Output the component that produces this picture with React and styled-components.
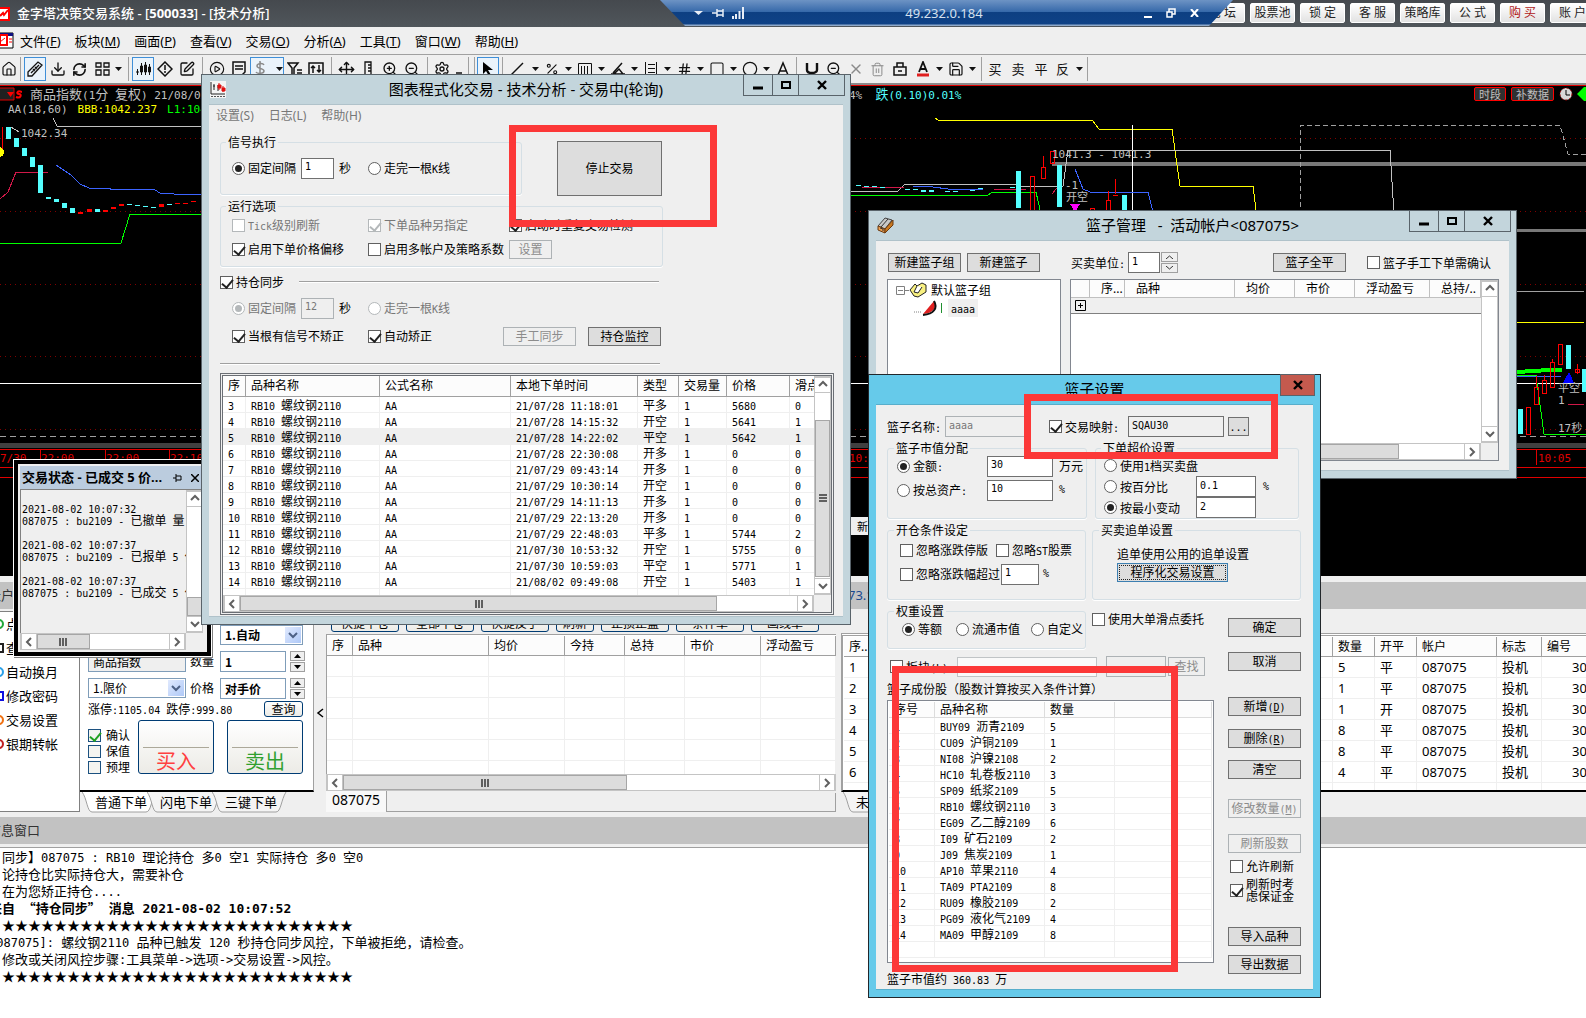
import React, { Component } from 'react';
import styled, { createGlobalStyle, css } from 'styled-components';
import {
  House, Download, RefreshCw, LayoutGrid, SquarePen, CirclePlay, Move, ZoomIn, ZoomOut,
  Settings, Percent, Hash, Square, Circle, X, Trash2, Lock, Save,
} from 'lucide-react';

const yahei = '"Noto Sans", "Noto Sans CJK SC", sans-serif';
const song = '"Noto Sans CJK SC", sans-serif';
const mono = '"DejaVu Sans Mono", "Noto Sans CJK SC", monospace';

const GlobalStyle = createGlobalStyle`
  * { box-sizing: border-box; }
  body {
    margin: 0;
    overflow: hidden;
    background: #fff;
    color: #000;
    font: 12px/16px ${song};
    --half: 10px;
  }
  button, input, select, fieldset, legend { margin: 0; padding: 0; font: inherit; color: inherit; border-radius: 0; }
`;

/* text: full width glyphs in the body face, ascii runs in a half width mono */
const Half = styled.span`
  font-family: ${mono};
  font-size: var(--half);
  line-height: 0;
  white-space: pre;
`;
const Sim = ({ children }) =>
  String(children).split(/([\x20-\x7e]+)/).filter(Boolean).map((part, i) =>
    /^[\x20-\x7e]/.test(part) ? <Half key={i}>{part}</Half> : part
  );

const Gap = styled.span`
  flex: 0 0 ${props => props.$w}px;
`;

/* ---------- controls ---------- */
const Push = styled.button`
  flex: none;
  width: ${props => props.$w || 73}px;
  height: ${props => props.$h || 19}px;
  padding-bottom: 1px;
  border: 1px solid #707070;
  background: #dddddd;
  line-height: 16px;
  white-space: nowrap;
  &:disabled {
    color: #8c8c8c;
    border-color: #adb2b5;
    background: #efefef;
  }
  ${props => props.$focus && css`
    border-color: #3c7fb1;
    outline: 1px dotted #222;
    outline-offset: -3px;
  `}
`;

const Field = styled.input`
  flex: none;
  width: ${props => props.$w}px;
  height: 21px;
  padding: 0 3px 3px;
  border: 1px solid #707070;
  background: ${props => (props.$gray ? '#efefef' : '#fff')};
  font: 10px/16px ${mono};
  &:disabled {
    color: #777;
    border-color: #adb2b5;
    background: #efefef;
  }
`;

const Option = styled.label`
  display: flex;
  align-items: center;
  gap: 3px;
  white-space: nowrap;
  color: ${props => (props.$dim ? '#777' : '#000')};
  line-height: ${props => (props.$tight ? 12 : 16)}px;
  input {
    appearance: none;
    position: relative;
    flex: none;
    width: 13px;
    height: 13px;
    border: 1px solid ${props => (props.$dim ? '#b4b8ba' : '#606060')};
    background: #fff;
  }
  input[type='radio'] {
    border-radius: 50%;
  }
  input[type='checkbox']:checked::after {
    content: '';
    position: absolute;
    left: 3px;
    top: 0;
    width: 5px;
    height: 9px;
    border: solid ${props => (props.$dim ? '#b4b8ba' : '#222')};
    border-width: 0 2px 2px 0;
    transform: rotate(40deg);
  }
  input[type='radio']:checked::after {
    content: '';
    position: absolute;
    inset: 2px;
    border-radius: 50%;
    background: ${props => (props.$dim ? '#b4b8ba' : '#222')};
  }
`;
const Tick = ({ text, on, dim, lines }) => (
  <Option $dim={dim} $tight={lines}>
    <input type="checkbox" defaultChecked={on} disabled={dim} />
    <span>{lines ? lines.map((l, i) => <React.Fragment key={l}>{i > 0 && <br />}{l}</React.Fragment>) : <Sim>{text}</Sim>}</span>
  </Option>
);
const Radio = ({ text, on, dim, name }) => (
  <Option $dim={dim}>
    <input type="radio" name={name} defaultChecked={on} disabled={dim} />
    <span><Sim>{text}</Sim></span>
  </Option>
);

const Group = styled.fieldset`
  flex: none;
  width: ${props => props.$w}px;
  min-width: 0;
  padding: ${props => props.$pad};
  border: 1px solid #d5dfe5;
  border-radius: 3px;
  box-shadow: 0 1px 0 #fff;
  legend {
    margin-left: ${props => props.$lead}px;
    padding: 0 2px;
    line-height: 12px;
    height: 12px;
  }
`;
const Line = styled.div`
  display: ${props => (props.$cols ? 'grid' : 'flex')};
  grid-template-columns: ${props => props.$cols};
  align-items: center;
  height: ${props => props.$h || 24}px;
  margin-top: ${props => props.$mt || 0}px;
  padding-left: ${props => props.$pl || 0}px;
  white-space: nowrap;
`;
const Cell = styled.div`
  display: flex;
  align-items: center;
  gap: ${props => props.$gap || 5}px;
  padding-left: ${props => props.$pl || 0}px;
`;
const Rule = styled.div`
  flex: 1;
  height: 2px;
  max-width: ${props => props.$max || 440}px;
  margin-top: ${props => props.$mt || 0}px;
  border-top: 1px solid #a0a0a0;
  border-bottom: 1px solid #fff;
`;

/* ---------- scroll bars ---------- */
const Bar = styled.div`
  display: flex;
  flex-direction: ${props => (props.$v ? 'column' : 'row')};
  ${props => (props.$v ? 'width: 17px; height: 100%;' : 'height: 17px; width: 100%;')}
  background: #fff;
  border: 1px solid #c4c4c4;
`;
const BarEnd = styled.button`
  flex: 0 0 16px;
  display: grid;
  place-items: center;
  border: 0 solid #c4c4c4;
  border-width: ${props => (props.$v ? '1px 0' : '0 1px')};
  background: #fff;
`;
const Thumb = styled.div`
  flex: ${props => props.$size} 0 0;
  display: grid;
  place-items: center;
  border: 1px solid #a6a6a6;
  background: #dcdcdc;
`;
const Track = styled.div`
  flex: ${props => props.$size} 0 0;
`;
const arrows = { up: 'M1 6l4-4 4 4', down: 'M1 3l4 4 4-4', left: 'M7 1L3 5l4 4', right: 'M3 1l4 4-4 4' };
const Arrow = ({ to, color = '#606060' }) => (
  <svg width="10" height="10"><path d={arrows[to]} fill="none" stroke={color} strokeWidth="2" /></svg>
);
const Scroll = ({ v, parts, grip }) => (
  <Bar $v={v}>
    <BarEnd type="button" $v={v} aria-label="back"><Arrow to={v ? 'up' : 'left'} /></BarEnd>
    <Track $size={parts[0]} />
    {parts[1] > 0 && (
      <Thumb $size={parts[1]}>
        {grip && <svg width="8" height="8"><path d={v ? 'M0 1h8M0 4h8M0 7h8' : 'M1 0v8M4 0v8M7 0v8'} stroke="#606060" strokeWidth="2" /></svg>}
      </Thumb>
    )}
    <Track $size={parts[2]} />
    <BarEnd type="button" $v={v} aria-label="forward"><Arrow to={v ? 'down' : 'right'} /></BarEnd>
  </Bar>
);

/* ---------- tables ---------- */
const Sheet = styled.div`
  overflow: hidden;
  min-width: 0;
  background: #fff;
`;
const Table = styled.table`
  width: ${props => props.$w || '100%'};
  table-layout: fixed;
  border-collapse: separate;
  border-spacing: 0;
  th, td {
    padding: 0 0 0 ${props => props.$inset || 5}px;
    text-align: left;
    font-weight: normal;
    white-space: nowrap;
    overflow: hidden;
    height: ${props => props.$row}px;
    line-height: ${props => props.$row - 1}px;
    border: solid #efefef;
    border-width: 0 1px 1px 0;
  }
  th {
    height: ${props => props.$head}px;
    line-height: ${props => props.$head - 1}px;
    background: #fcfcfc;
    font-family: ${yahei};
    border-color: ${props => props.$line || '#a0a0a0'};
  }
  td { ${props => props.$ui && `font-family: ${yahei}; font-size: 13px;`} }
  tr[data-hot] td { background: #efefef; }
`;
const Cols = ({ widths }) => (
  <colgroup>{widths.map((w, i) => <col key={i} width={w || undefined} />)}</colgroup>
);
const Blank = ({ n }) => <tr>{Array.from({ length: n }, (_, i) => <td key={i} />)}</tr>;

/* ---------- floating windows ---------- */
const Frame = styled.section`
  position: absolute;
  left: ${props => props.$x}px;
  top: ${props => props.$y}px;
  width: ${props => props.$w}px;
  padding: 0 7px 7px;
  border: 1px solid ${props => (props.$active ? '#22272b' : '#59636a')};
  background: ${props => (props.$active ? '#66caea' : '#c3d5dc')};
`;
const Caption = styled.header`
  position: relative;
  display: flex;
  justify-content: center;
  height: 29px;
  line-height: 28px;
  font-family: ${yahei};
  font-size: 15px;
  white-space: pre;
`;
const CaptionIcon = styled.span`
  position: absolute;
  left: 1px;
  top: 6px;
  line-height: 0;
`;
const CaptionButtons = styled.div`
  position: absolute;
  right: -2px;
  top: -1px;
  display: flex;
`;
const CaptionButton = styled.button`
  width: ${props => props.$w}px;
  height: 22px;
  margin-left: -1px;
  display: grid;
  place-items: center;
  border: 1px solid #59636a;
  background: ${props => (props.$red ? '#c45a4e' : 'transparent')};
`;
const Body = styled.div`
  border: 1px solid ${props => (props.$active ? '#58aecb' : '#b0c2ca')};
  border-left: 0;
  border-right: 0;
  background: #efefef;
`;
const glyphs = { min: 'M1 9h10', max: 'M2 3h8v6H2z', close: 'M2 2l8 8M10 2l-8 8' };
const WinButtons = ({ only }) => (
  <CaptionButtons>
    {!only && <CaptionButton $w={30} aria-label="min"><svg width="12" height="12"><path d={glyphs.min} stroke="#000" strokeWidth="3" /></svg></CaptionButton>}
    {!only && <CaptionButton $w={27} aria-label="max"><svg width="12" height="12"><path d={glyphs.max} fill="none" stroke="#000" strokeWidth="2" /></svg></CaptionButton>}
    <CaptionButton $w={only ? 35 : 47} $red={only} aria-label="close"><svg width="12" height="12"><path d={glyphs.close} stroke="#000" strokeWidth="2.4" /></svg></CaptionButton>
  </CaptionButtons>
);

const Mark = styled.div`
  position: absolute;
  left: ${props => props.$x}px;
  top: ${props => props.$y}px;
  width: ${props => props.$w}px;
  height: ${props => props.$h}px;
  border: 7px solid #fc3838;
  pointer-events: none;
`;

/* ---------- main window ---------- */
const Desk = styled.main`
  position: relative;
  display: flex;
  flex-direction: column;
  min-height: 100vh;
  overflow: hidden;
  background: #efefef;
`;
const TitleBar = styled.header`
  display: flex;
  align-items: center;
  height: 27px;
  overflow: hidden;
  background: linear-gradient(#45494e, #50565b);
  color: #fff;
  font: bold 13px/27px ${yahei};
`;
const TitleText = styled.h1`
  margin: 0 0 0 7px;
  font: inherit;
  font-weight: 500;
  b { font-weight: 700; }
`;
const Links = styled.nav`
  display: flex;
  gap: 5px;
  margin: -2px -9px 0 auto;
`;
const LinkButton = styled.button`
  width: 45px;
  height: 20px;
  border: 1px solid #fff;
  border-radius: 2px;
  background: linear-gradient(#fff, #e2e2e2);
  color: ${props => (props.$red ? '#b01818' : '#222')};
  font: 12px/18px ${yahei};
  white-space: pre;
`;
const Remote = styled.div`
  position: absolute;
  left: 660px;
  top: 0;
  width: 573px;
  height: 26px;
  padding: 0 34px 0 32px;
  display: flex;
  align-items: center;
  justify-content: space-between;
  clip-path: polygon(0 0, 100% 0, calc(100% - 24px) 100%, 25px 100%);
  background: linear-gradient(#6d93c4 0, #3568a9 12px, #0d3f82 12px, #0f4286 24px, #8fa9c9 25px);
  color: #d5e0ee;
  font: 13px/24px ${yahei};
`;
const RemoteIcons = styled.div`
  display: flex;
  align-items: center;
  gap: ${props => props.$gap}px;
  svg { display: block; }
`;
const MenuBar = styled.nav`
  display: flex;
  align-items: center;
  gap: 14px;
  height: 28px;
  border-bottom: 1px solid #a0a0a0;
  font: 13px/26px ${yahei};
`;
const Plain = styled.button`
  border: 0;
  background: none;
  color: ${props => props.$color || '#000'};
  white-space: nowrap;
`;
const Tools = styled.div`
  display: flex;
  align-items: center;
  height: 30px;
  border-bottom: 2px solid #8a8a8a;
  font: 13px/24px ${yahei};
`;
const Tool = styled.button`
  flex: none;
  width: ${props => props.$w}px;
  height: 24px;
  display: flex;
  align-items: center;
  justify-content: center;
  gap: 8px;
  border: ${props => (props.$on ? '1px solid #3f8fd8' : 0)};
  background: ${props => (props.$on ? '#eaf3fb' : 'none')};
  color: ${props => (props.$dim ? '#8a8a8a' : '#111')};
  svg { flex: none; }
`;
const Sep = styled.span`
  flex: 0 0 ${props => props.$w}px;
  height: 24px;
  background: linear-gradient(#a0a0a0, #a0a0a0) center / 1px 100% no-repeat;
`;

const d = (path, sw = 1.5) => <svg width="16" height="16" viewBox="0 0 16 16" fill="none" stroke="currentColor" strokeWidth={sw}><path d={path} /></svg>;
const Drop = () => <svg width="7" height="4"><path d="M0 0h7L3.500 4z" fill="#111" /></svg>;
const tools = [
  [17, <House size={16} strokeWidth={1.8} />], ['|', 7],
  [22, d('M1 11L11 1l4 3L5 15H1zM4 12l8-8M6 8l2 2M8 6l2 2', 1.3), 'on'], [23, <Download size={16} />],
  [21, <RefreshCw size={15} strokeWidth={2.6} />],
  [23, d('M2 2h5v4H2zM10 2h5v4h-5zM2 9h5v5H2zM10 9h5v5h-5z', 1.3)], [11, <Drop />], ['|', 8],
  [22, d('M2.5 8v6M1 11h3M6.500 2v12M10.500 1v13M14.500 3v11M5.500 5h2v6h-2zM9.500 4h2v7h-2zM13.500 6h2v5h-2z', 1), 'on'],
  [22, d('M8 1l7 7-7 7-7-7zM8 4v5M8 10v2')], [22, <SquarePen size={16} />], ['|', 8],
  [22, <CirclePlay size={16} strokeWidth={1.7} />], [22, d('M2 1h12v10l-3 3H2zM4 5h8M4 8h8')],
  [34, <React.Fragment key="s">{d('M12 4c-1-2-7-2-7 1s7 2 7 5-7 3-8 1M8 0v16')}<Drop /></React.Fragment>, 'on', 'dim'],
  [21, d('M1 2h10L7 7v7H5V7zM10 9h5M10 12h5')], [22, d('M1 2h14v12H1zM5 12V5M3 7l2-2 2 2M11 4v7M9 9l2 2 2-2')], ['|', 8],
  [22, <Move size={17} />], [22, d('M5 1h6v14H5zM8 4h3M8 7h3M8 10h3', 1.3)], [22, <ZoomIn size={16} />], [22, <ZoomOut size={16} />], ['|', 8],
  [22, <Settings size={16} />], [12, d('M5 12h6')], ['|', 6], ['|', 6],
  [22, <svg width="14" height="16" key="p"><path d="M2 1v12l3-3 3 5 2-1-3-5h5z" fill="#000" /></svg>, 'on'], ['|', 7],
  [21, d('M2 14L14 2')], [16, <Drop />],
  [18, <Percent size={14} />], [15, <Drop />], [18, d('M1.500 2.500h13v11h-13zM4.500 5v8M7.500 5v8M10.500 5v8', 1)], [15, <Drop />],
  [18, d('M1 13h14M3 12L12 2M4 13l5-5 4 5')], [15, <Drop />], [18, d('M2.500 1v14M13.500 1v14M5 3.500h7M5 7.500h7M5 11.500h7', 1)], [15, <Drop />],
  [18, <Hash size={15} />], [15, <Drop />], [18, <Square size={16} strokeWidth={1.6} />], [15, <Drop />],
  [18, <Circle size={16} strokeWidth={1.8} />], [15, <Drop />], [18, d('M3 14L8 2l5 12M5 10h6')], ['|', 9],
  [22, d('M3 2v7c0 4 10 4 10 0V2', 2.4)], [22, <ZoomOut size={16} />], [21, <X size={16} />, '', 'dim'],
  [23, <Trash2 size={15} strokeWidth={1.6} />, '', 'dim'], [22, d('M2 6h12v8H2zM5 6V2h6v4M6 10h4')],
  [23, <svg width="14" height="16" key="a"><path d="M3 11L7 1l4 10M4 8h6" fill="none" stroke="#111" strokeWidth="1.800" /><path d="M1 14h12" stroke="#e02020" strokeWidth="3" /></svg>],
  [11, <Drop />], [22, <Save size={16} strokeWidth={1.8} />], [11, <Drop />], ['|', 6],
  [22, '买'], [24, '卖'], [22, '平'], [21, '反'], [13, <Drop />], ['|', 2],
];

/* ---------- chart ---------- */
const ChartBox = styled.section`
  position: relative;
  height: 491px;
  overflow: hidden;
  border-top: 1px solid #e00000;
  background: #000;
  color: #c0c0c0;
  font-size: 13px;
  --half: 11px;
`;
const ChartHead = styled.div`
  position: relative;
  display: grid;
  grid-template-columns: 849px 1fr auto;
  align-items: center;
  height: 16px;
  white-space: nowrap;
  em { font-style: normal; color: #54ffff; }
`;
const HeadPart = styled.div`
  display: flex;
  align-items: center;
  gap: ${props => props.$gap}px;
  padding-left: ${props => props.$pl || 0}px;
`;
const Quote = styled(Half)`
  color: ${props => props.$c};
`;
const RedTag = styled.button`
  height: 14px;
  padding: 0 4px;
  border: 1px solid #f00;
  border-radius: 2px;
  background: #303030;
  color: #c0c0c0;
  font: 11px/11px ${song};
`;
const Plot = styled.svg`
  position: absolute;
  left: 0;
  top: 0;
  font: 11px ${mono};
`;
const leftBars = [
  [6, 127, 12], [14, 138, 9], [22, 148, 8], [30, 157, 10], [38, 165, 28], [46, 197, 2], [54, 199, 3], [62, 203, 5],
  [70, 208, 5], [95, 209, 3], [127, 204, 1], [135, 205, 1], [143, 206, 1], [151, 207, 1], [167, 204, 1],
];
const leftReds = [[78, 212, 2], [87, 209, 3], [103, 210, 2], [111, 207, 2], [119, 204, 2], [159, 204, 3], [175, 203, 1], [183, 203, 1], [191, 201, 1]];
const cyanBars = [
  [1016, 171, 37], [1057, 165, 42], [1122, 195, 20], [856, 185, 1], [864, 186, 1], [872, 186, 1], [880, 187, 1],
  [905, 189, 1], [913, 189, 1], [921, 190, 2], [929, 190, 2], [945, 191, 1], [953, 191, 1], [970, 190, 1], [978, 188, 1], [1010, 187, 1],
  [1518, 409, 25], [1566, 345, 24], [1582, 369, 23],
];
const redBoxes = [
  [1030, 176, 34], [1041, 167, 11], [1050, 151, 12], [1106, 200, 12], [1090, 208, 6],
  [1526, 407, 27], [1534, 387, 17], [1542, 380, 13], [1550, 362, 25], [1558, 344, 20], [1575, 369, 3],
];
const wicks = ['M1043 156v11M1108 191v9M1115 179v15M1113 195h5', 'M1536 376v11M1544 375v5M1552 359v3M1577 364v10'];
const Chart = () => (
  <ChartBox>
    <Plot width="1586" height="491" viewBox="0 86 1586 491" shapeRendering="crispEdges" fill="none">
      <path d="M0 138.500H1586M0 211.500H1586M0 284.500H1586M0 356.500H1586M0 429.500H1586" stroke="#800000" strokeDasharray="1 4" />
      <path d="M0 383.500H1586" stroke="#fff" />
      <path d="M0 436.500H1586" stroke="#a0a0a0" strokeDasharray="6 4" />
      <path d="M1052 164h534" stroke="#787878" strokeWidth="4" />
      <path d="M1500 230.500h86" stroke="#787878" strokeWidth="3" />
      <path d="M1500 291.500h84" stroke="#a0a0a0" />
      <path d="M1500 322.500h84M935 118l3 2h154l7 9h73l8 57h73l3 24" stroke="#ff0" />
      <path d="M1132.500 125v90" stroke="#fff" />
      <path d="M1300 215l1-90h259l8 29h18" stroke="#a0a0a0" strokeDasharray="5 3" />
      <path d="M53 118l4 8h145M851 191h47l7-7h109l6 2h43l5-36h322l4 64M11 127l8 5" stroke="#c0c0c0" />
      <path d="M56 165l15 10 9 9 9 4h21v1h32l13 1 5 3 14 1h30M913 186l20 1 15 2h35M1075 169l8 20 7 3h58l5 20M1516 376h45" stroke="#3c64ff" />
      <path d="M0 199l8-7 8-20h32M862 187h42M994 189h32M1052 194l8-10M1568 404h16" stroke="#d01848" />
      <path d="M0 243h121l9-29h72M851 195h137l5-3h43l5 22M1517 375h19l8 59h42" stroke="#0f0" />
      <path d="M1517 372l32-2h13" stroke="#0f0" strokeWidth="4" />
      {[...leftBars, ...cyanBars].map(([x, y, h]) => <rect key={`${x}-${y}`} x={x} y={y} width="5" height={h} fill="#54ffff" />)}
      {leftReds.map(([x, y, h]) => <rect key={x} x={x} y={y} width="5" height={h} fill="#f00" />)}
      {redBoxes.map(([x, y, h]) => <rect key={x} x={x} y={y} width="4" height={h} stroke="#f00" />)}
      {wicks.map(w => <path key={w} d={w} stroke="#f00" />)}
      <path d="M1070 204h10l-5 8z" fill="#f0f" />
      <path d="M1564 382l5-9 4 9z" fill="#00f" stroke="#00f" />
      <circle cx="-1" cy="152" r="5" fill="#ff0" />
      <path d="M2.500 127v22" stroke="#f00" />
      <path d="M0 445.500h1586" stroke="#404040" strokeWidth="5" />
      <path d="M0 449.500h1586M0 467.500h1586M0 477.500h1586M40.500 449v18M105.500 449v18M169.500 449v18M1536.500 449v16" stroke="#e00000" />
      <g fill="#e00000">
        <text x="0" y="462">7/30</text>
        <text x="41" y="462">22:00</text>
        <text x="106" y="462">22:00</text>
        <text x="170" y="462">22:10</text>
        <text x="849" y="462">10:</text>
        <text x="1538" y="462">10:05</text>
      </g>
      <g fill="#c0c0c0">
        <text x="21" y="137">1042.34</text>
        <text x="1052" y="158">1041.3 - 1041.3</text>
        <text x="1065" y="189">-1</text>
        <text x="1066" y="201">开空</text>
        <text x="1558" y="392">平空</text>
        <text x="1558" y="404">1</text>
        <text x="1558" y="432">17秒</text>
      </g>
      <rect x="851" y="517" width="18" height="18" fill="#efefef" />
      <text x="857" y="531" fill="#000">新</text>
    </Plot>
    <ChartHead>
      <HeadPart $gap={8}>
        <svg width="22" height="14"><path d="M0 1h14v12H0" fill="#202020" stroke="#e00000" /><path d="M7 5h7l-3.500 5z" fill="#f00" /><path d="M22 5c-5-2-6 2-3 2s2 5-3 3" fill="none" stroke="#f00" strokeWidth="2" /></svg>
        <span><Sim>商品指数(1分 复权) 21/08/02</Sim></span>
      </HeadPart>
      <span><Half>4% </Half><em><Sim> 跌(0.10)0.01%</Sim></em></span>
      <HeadPart $gap={5}>
        <RedTag>时段</RedTag><RedTag>补数据</RedTag>
        <svg width="27" height="14">
          <circle cx="7" cy="7" r="6" fill="#d8d8d8" stroke="#a00000" strokeDasharray="2 2" /><path d="M7 3v5h4" stroke="#000" fill="none" />
          <path d="M18 7l7-7h4v14h-4z" fill="#0f0" />
        </svg>
      </HeadPart>
    </ChartHead>
    <ChartHead>
      <HeadPart $gap={10} $pl={8}>
        <Quote>AA(18,60)</Quote>
        <Quote $c="#ff0">BBB:1042.237</Quote>
        <Quote $c="#0f0">L1:1042</Quote>
      </HeadPart>
    </ChartHead>
  </ChartBox>
);

/* ---------- lower panels ---------- */
const Band = styled.div`
  display: flex;
  height: 27px;
  margin-top: ${props => (props.$top ? 6 : 0)}px;
  background: #c2c2c2;
  color: #333;
  font: 13px/27px ${yahei};
  white-space: nowrap;
  span { flex: 0 0 860px; margin-left: -12px; }
  b { font-weight: normal; color: #1a4a90; }
`;
const Panels = styled.div`
  display: flex;
  align-items: flex-start;
  height: 208px;
`;
const Side = styled.ul`
  flex: 0 0 80px;
  height: 201px;
  margin: 2px 0 0;
  padding: 0;
  list-style: none;
  overflow: hidden;
  background: #fff;
  border: solid #808080;
  border-width: 1px 1px 1px 0;
  font: 13px/24px ${yahei};
  li { display: flex; align-items: center; height: 24px; white-space: nowrap; gap: 2px; }
  a { color: #000; text-decoration: none; }
`;
const Dot = styled.i`
  width: 10px;
  height: 10px;
  margin-left: -6px;
  border: 2px solid ${props => props.$c};
  border-radius: ${props => (props.$sq ? 0 : '50%')};
`;
const Order = styled.form`
  flex: 0 0 234px;
  min-width: 0;
`;
const OrderBody = styled.div`
  height: 183px;
  padding: 16px 8px 0;
  background: #fff;
  border-bottom: 2px solid #000;
  border-right: 1px solid #a0a0a0;
`;
const OrderRow = styled.div`
  display: grid;
  grid-template-columns: 98px 26px 66px 15px;
  column-gap: 4px;
  align-items: center;
  height: ${props => props.$h}px;
  margin-bottom: ${props => props.$mb}px;
  white-space: nowrap;
`;
const XpInput = styled.input`
  width: 100%;
  height: 21px;
  padding: 0 4px;
  border: 1px solid #7f9db9;
  background: ${props => (props.$gray ? '#efefef' : '#fff')};
  font: ${props => (props.$gray ? 'normal' : 'bold')} 12px/18px ${song};
`;
const XpPick = styled.div`
  position: relative;
  grid-column: ${props => props.$span || 'auto'};
  width: ${props => props.$w}px;
  select {
    appearance: none;
    width: 100%;
    height: 20px;
    padding: 0 4px;
    border: 1px solid #7f9db9;
    background: #fff;
    font-weight: ${props => (props.$bold ? 700 : 400)};
  }
  span {
    position: absolute;
    right: 2px;
    top: 2px;
    width: 16px;
    height: 16px;
    display: grid;
    place-items: center;
    background: linear-gradient(135deg, #e1eafe, #aec8f7);
    pointer-events: none;
  }
`;
const Spin = styled.div`
  width: ${props => props.$w || 15}px;
  display: flex;
  flex-direction: column;
  gap: 1px;
  button {
    height: 10px;
    display: grid;
    place-items: center;
    border: 1px solid #a0a0a0;
    background: #efefef;
  }
`;
const Spinner = ({ w, open }) => (
  <Spin $w={w}>
    <button type="button" aria-label="up"><svg width="7" height="4">{open ? <path d="M0 4l3.500-3L7 4" fill="none" stroke="#333" /> : <path d="M0 4h7L3.500 0z" />}</svg></button>
    <button type="button" aria-label="down"><svg width="7" height="4">{open ? <path d="M0 0l3.500 3L7 0" fill="none" stroke="#333" /> : <path d="M0 0h7L3.500 4z" />}</svg></button>
  </Spin>
);
const XpButton = styled.button`
  flex: none;
  width: ${props => props.$w}px;
  height: ${props => props.$h}px;
  border: 1px solid #003c74;
  border-radius: 3px;
  background: linear-gradient(#fff, #ecebe6);
  line-height: ${props => props.$h - 2}px;
  white-space: nowrap;
`;
const Deal = styled(XpButton)`
  padding: 26px 4px 0;
  color: ${props => props.$color};
  font: 20px/26px ${song};
  span { display: block; border-top: 1px solid #aca899; }
`;
const OrderFoot = styled.div`
  display: flex;
  gap: 13px;
  height: 55px;
  margin-top: 3px;
`;
const XpChecks = styled.div`
  flex: 0 0 37px;
  min-width: 0;
  display: flex;
  flex-direction: column;
  padding-top: 7px;
  label { gap: 5px; height: 17px; }
  input { border-color: #1c5180; background: #f4f4f0; }
  input[type='checkbox']:checked::after { border-color: #21a121; }
`;
const Tabs = styled.div`
  display: flex;
  padding-left: 2px;
`;
const TabButton = styled.button`
  position: relative;
  flex: none;
  width: 65px;
  height: 20px;
  padding-left: 13px;
  border: 0;
  background: none;
  text-align: left;
  font: 13px/20px ${yahei};
  white-space: nowrap;
  svg { position: absolute; left: 0; top: 0; }
  span { position: relative; }
`;
const Tab = ({ text, on }) => (
  <TabButton type="button">
    <svg width="76" height="21"><path d="M0 0C5 6 5 20 10 20H64C69 20 69 8 74 0" fill={on ? '#fff' : '#f4f4f4'} stroke="#a0a0a0" /></svg>
    <span>{text}</span>
  </TabButton>
);
const Fold = styled.button`
  flex: 0 0 12px;
  align-self: center;
  border: 0;
  background: none;
  padding: 0;
`;
const Positions = styled.section`
  flex: 0 0 510px;
  min-width: 0;
`;
const PosButtons = styled.div`
  display: flex;
  gap: 7px;
  padding: 4px 0 2px 5px;
`;
const PosSheet = styled(Sheet)`
  height: 140px;
  border: solid #a0a0a0;
  border-width: 1px 0 0 1px;
  padding-top: 1px;
`;
const Account = styled.div`
  display: flex;
  height: 21px;
  font: 14px/16px ${yahei};
  button { flex: 0 0 61px; border: 0; border-right: 1px solid #a0a0a0; background: #f8f8f8; padding-bottom: 4px; }
  div { flex: 1; margin-top: 2px; border: solid #a0a0a0; border-width: 0 1px 1px 0; }
`;
const Deals = styled.section`
  flex: 1;
  min-width: 0;
  margin: 24px 0 0 5px;
`;
const DealSheet = styled(Sheet)`
  height: 159px;
  padding: 1px 0 0 1px;
  border: solid #a0a0a0;
  border-width: 3px 0 0 2px;
  border-style: double solid;
  border-bottom: 2px solid #000;
  td:last-child { padding-left: 30px; }
`;
const Log = styled.section`
  flex: 1;
  margin-top: 3px;
  padding-left: 2px;
  border-top: 1px solid #a0a0a0;
  background: #fff;
  overflow: hidden;
  font-size: 13px;
  --half: 12px;
  p { margin: 0; line-height: 17px; white-space: nowrap; }
  p.cut { margin-left: -13px; }
  p.bold { font-weight: bold; --half: 13px; }
`;
const stars = '★'.repeat(27);

const dealRows = [['1', '5', '平'], ['2', '1', '平'], ['3', '1', '开'], ['4', '8', '平'], ['5', '8', '平'], ['6', '4', '平']];

const Lower = () => (
  <>
    <Band $top><span>账户</span><b>73.1</b></Band>
    <Panels>
      <Side>
        {[['点价交易', '#22a83a'], ['查询', '#222', 1], ['自动换月', '#2aa0e8'], ['修改密码', '#1010e0', 1], ['交易设置', '#f07010'], ['银期转帐', '#c02020']].map(([t, c, sq]) => (
          <li key={t}><Dot $c={c} $sq={sq} /><a href="#menu">{t}</a></li>
        ))}
      </Side>
      <Order onSubmit={e => e.preventDefault()}>
        <OrderBody>
          <OrderRow $h={20} $mb={5}>
            <span /><span />
            <XpPick $w={83} $span="3 / 5" $bold><select aria-label="投保"><option>1.自动</option></select><span><Arrow to="down" color="#4d6185" /></span></XpPick>
          </OrderRow>
          <OrderRow $h={22} $mb={5}>
            <XpInput $gray defaultValue="商品指数" aria-label="品种" />
            <label htmlFor="qty">数量</label>
            <XpInput id="qty" defaultValue="1" /><Spinner />
          </OrderRow>
          <OrderRow $h={22} $mb={2}>
            <XpPick $w={98}><select aria-label="限价"><option>1.限价</option></select><span><Arrow to="down" color="#4d6185" /></span></XpPick>
            <label htmlFor="price">价格</label>
            <XpInput id="price" defaultValue="对手价" /><Spinner />
          </OrderRow>
          <Line $h={16} $cols="1fr 41px">
            <span><Sim>涨停:1105.04 跌停:999.80</Sim></span>
            <XpButton type="button" $w={39} $h={16}>查询</XpButton>
          </Line>
          <OrderFoot>
            <XpChecks><Tick text="确认" on /><Tick text="保值" /><Tick text="预埋" /></XpChecks>
            <Deal $w={76} $h={54} $color="#ff4040"><span>买入</span></Deal>
            <Deal $w={76} $h={54} $color="#30a030"><span>卖出</span></Deal>
          </OrderFoot>
        </OrderBody>
        <Tabs><Tab text="普通下单" on /><Tab text="闪电下单" /><Tab text="三键下单" /></Tabs>
      </Order>
      <Fold aria-label="fold"><svg width="8" height="10"><path d="M7 1L2 5l5 4" fill="none" stroke="#000" strokeWidth="1.500" /></svg></Fold>
      <Positions>
        <PosButtons>
          {['快捷平仓', '全部平仓', '快捷反手', '刷新', '止损止盈', '条件单', '画线单'].map(t => (
            <XpButton key={t} $w={t === '刷新' ? 38 : 68} $h={19}>{t}</XpButton>
          ))}
        </PosButtons>
        <PosSheet>
          <Table $row={21} $head={20}>
            <Cols widths={[26, 136, 76, 60, 60, 76, 0]} />
            <thead><tr>{['序', '品种', '均价', '今持', '总持', '市价', '浮动盈亏'].map(t => <th key={t}>{t}</th>)}</tr></thead>
            <tbody>{[1, 2, 3, 4, 5, 6].map(r => <Blank key={r} n={7} />)}</tbody>
          </Table>
        </PosSheet>
        <Scroll parts={[0, 283, 192]} grip />
        <Account><button type="button">087075</button><div /></Account>
      </Positions>
      <Deals>
        <DealSheet>
          <Table $row={21} $head={20} $ui $w="860px">
            <Cols widths={[30, 459, 42, 42, 80, 45, 0]} />
            <thead><tr><th>序..</th><th />{['数量', '开平', '帐户', '标志', '编号'].map(t => <th key={t}>{t}</th>)}</tr></thead>
            <tbody>
              {dealRows.map(([n, q, side]) => (
                <tr key={n}><td>{n}</td><td /><td>{q}</td><td>{side}</td><td>087075</td><td>投机</td><td>30</td></tr>
              ))}
              <Blank n={7} />
            </tbody>
          </Table>
        </DealSheet>
        <Tabs><Tab text="未成交" /></Tabs>
      </Deals>
    </Panels>
    <Band><span>信息窗口</span></Band>
    <Log>
      <p><Sim>同步】087075 : RB10 理论持仓 多0 空1 实际持仓 多0 空0</Sim></p>
      <p>论持仓比实际持仓大，需要补仓</p>
      <p><Sim>在为您矫正持仓....</Sim></p>
      <p className="bold cut"><Sim>来自 “持仓同步” 消息 2021-08-02 10:07:52</Sim></p>
      <p>{stars}</p>
      <p className="cut"><Sim>[087075]: 螺纹钢2110 品种已触发 120 秒持仓同步风控，下单被拒绝，请检查。</Sim></p>
      <p><Sim>修改或关闭风控步骤:工具菜单-&gt;选项-&gt;交易设置-&gt;风控。</Sim></p>
      <p>{stars}</p>
    </Log>
  </>
);

/* ---------- trade state pane ---------- */
const StatePane = styled.section`
  position: absolute;
  left: 14px;
  top: 460px;
  width: 197px;
  padding: 2px;
  border: 4px solid #000;
  outline: 1px solid #fff;
  background: #efefef;
  box-shadow: 1px 1px 0 1px #808080;
`;
const StateTitle = styled.header`
  display: flex;
  align-items: center;
  height: 23px;
  padding: 0 6px 0 2px;
  gap: 9px;
  background: #bbccde;
  font: bold 13px/23px ${yahei};
  white-space: nowrap;
  span { flex: 1; }
`;
const StateGrid = styled.div`
  display: grid;
  grid-template: 143px 17px / 166px 17px;
  border-top: 1px solid #808080;
`;
const StateText = styled.pre`
  margin: 0;
  padding: 12px 0 0 1px;
  overflow: hidden;
  border-left: 1px solid #808080;
  font: 12px/12px ${song};
`;
const Status = () => (
  <StatePane>
    <StateTitle>
      <span>交易状态 - 已成交 5 价...</span>
      <svg width="9" height="8"><path d="M0 4h3M3 0v8M3 2h5v4H3" fill="none" stroke="#000" /></svg>
      <svg width="8" height="8"><path d="M0 0l8 8M8 0L0 8" stroke="#000" strokeWidth="1.500" /></svg>
    </StateTitle>
    <StateGrid>
      <StateText><Sim>2021-08-02 10:07:32</Sim>{'\n'}<Sim>087075 : bu2109 - 已撤单 量: 5</Sim>{'\n\n'}<Sim>2021-08-02 10:07:37</Sim>{'\n'}<Sim>087075 : bu2109 - 已报单 5 价</Sim>{'\n\n'}<Sim>2021-08-02 10:07:37</Sim>{'\n'}<Sim>087075 : bu2109 - 已成交 5 价</Sim></StateText>
      <Scroll v parts={[92, 17, 0]} />
      <Scroll parts={[0, 51, 80]} grip />
    </StateGrid>
  </StatePane>
);

/* ---------- auto trading window ---------- */
const TradeMenu = styled.nav`
  display: flex;
  gap: 15px;
  height: 21px;
  padding-left: 7px;
  font: 12px/18px ${yahei};
`;
const TradeBody = styled.div`
  padding: 10px 9px 1px 11px;
`;
const StopRow = styled.div`
  display: flex;
  align-items: flex-start;
  > button { margin: 5px 0 0 35px; }
`;
const ListBox = styled.div`
  display: grid;
  grid-template: ${props => props.$rows} / minmax(0, 1fr) 17px;
  margin-top: ${props => props.$mt || 0}px;
  border: ${props => (props.$double ? '3px double #6a6e74' : '1px solid #828790')};
  background: #efefef;
`;
const tradeRows = [
  [3, '21/07/28 11:18:01', '平多', 5680, 0], [4, '21/07/28 14:15:32', '开空', 5641, 1], [5, '21/07/28 14:22:02', '平空', 5642, 1],
  [6, '21/07/28 22:30:08', '开多', 0, 0], [7, '21/07/29 09:43:14', '开多', 0, 0], [8, '21/07/29 10:30:14', '开空', 0, 0],
  [9, '21/07/29 14:11:13', '开多', 0, 0], [10, '21/07/29 22:13:20', '开多', 0, 0], [11, '21/07/29 22:48:03', '平多', 5744, 2],
  [12, '21/07/30 10:53:32', '开空', 5755, 0], [13, '21/07/30 10:59:03', '平空', 5771, 1], [14, '21/08/02 09:49:08', '开空', 5403, 1],
];
const third = '136px 141px 1fr';
const TradeWindow = () => (
  <Frame $x={201} $y={74} $w={650}>
    <Caption>
      <CaptionIcon><svg width="16" height="17"><path d="M0 0h16v17H0z" fill="#f4f4f4" /><path d="M1 1v12h14M4 3v6M3 5h2M8 4v6" stroke="#222" fill="none" /><path d="M9 2v7M13 5v6M8 4h3v3H8zM12 7h3v3h-3z" stroke="#e01010" fill="#e01010" /><path d="M1 15.500h14" stroke="#555" strokeDasharray="2 1" /></svg></CaptionIcon>
      图表程式化交易 - 技术分析 - 交易中(轮询)
      <WinButtons />
    </Caption>
    <Body>
      <TradeMenu>
        <Plain $color="#777">设置(S)</Plain><Plain $color="#777">日志(L)</Plain><Plain $color="#777">帮助(H)</Plain>
      </TradeMenu>
      <TradeBody>
        <StopRow>
          <Group $w={302} $lead={-6} $pad="8px 0 14px 11px">
            <legend>信号执行</legend>
            <Line $cols={third}>
              <Cell><Radio name="sig" text="固定间隔" on /><Field $w={33} defaultValue="1" aria-label="间隔" /><span>秒</span></Cell>
              <Radio name="sig" text="走完一根K线" />
            </Line>
          </Group>
          <Push $w={105} $h={55}>停止交易</Push>
        </StopRow>
        <Line $h={4} />
        <Group $w={443} $lead={-6} $pad="1px 0 5px 11px">
          <legend>运行选项</legend>
          <Line $cols={third}><Tick text="Tick级别刷新" dim /><Tick text="下单品种另指定" on dim /><Tick text="启动时重复交易检测" on /></Line>
          <Line $cols={third}><Tick text="启用下单价格偏移" on /><Tick text="启用多帐户及策略系数" /><Push $w={43} disabled>设置</Push></Line>
        </Group>
        <Line $h={16} $mt={7}><Tick text="持仓同步" on /><Gap $w={15} /><Rule $max={360} /></Line>
        <Line $cols={third} $mt={6} $pl={12}>
          <Cell><Radio name="sync" text="固定间隔" on dim /><Field $w={33} defaultValue="12" disabled aria-label="同步间隔" /><span>秒</span></Cell>
          <Radio name="sync" text="走完一根K线" dim />
        </Line>
        <Line $cols="136px 135px 1fr" $mt={4} $pl={12}>
          <Tick text="当根有信号不矫正" on /><Tick text="自动矫正" on />
          <Cell $gap={12}><Push disabled>手工同步</Push><Push>持仓监控</Push></Cell>
        </Line>
        <Rule $mt={15} />
        <ListBox $double $mt={8} $rows="219px 17px">
          <Sheet>
            <Table $row={16} $head={21} $w="620px">
              <Cols widths={[23, 134, 131, 127, 41, 48, 63, 0]} />
              <thead><tr>{['序', '品种名称', '公式名称', '本地下单时间', '类型', '交易量', '价格', '滑点'].map(t => <th key={t}>{t}</th>)}</tr></thead>
              <tbody>
                {tradeRows.map(([n, time, kind, price, slip]) => (
                  <tr key={n} data-hot={n === 5 || undefined}>
                    {[n, 'RB10 螺纹钢2110', 'AA', time, kind, 1, price, slip].map((c, i) => <td key={i}><Sim>{c}</Sim></td>)}
                  </tr>
                ))}
                <Blank n={8} />
              </tbody>
            </Table>
          </Sheet>
          <Scroll v parts={[27, 158, 1]} grip />
          <Scroll parts={[0, 476, 80]} grip />
        </ListBox>
      </TradeBody>
    </Body>
  </Frame>
);

/* ---------- basket manager ---------- */
const BasketBody = styled.div`
  padding: 11px 10px 9px 11px;
`;
const BasketPanes = styled.div`
  display: grid;
  grid-template-columns: 174px 429px;
  gap: 9px;
  margin-top: 6px;
`;
const Tree = styled.ul`
  margin: 0;
  padding: 1px 0 0 8px;
  list-style: none;
  border: 1px solid #828790;
  background: #fff;
  li { display: flex; align-items: center; height: 18px; gap: 3px; }
  li li { padding-left: 17px; }
  ul { margin: 0; padding: 0; list-style: none; }
  mark { padding: 1px 3px; background: #efefef; }
`;
const Plus = styled.tr`
  && td { padding-left: 4px; background: #efefef; border-right: 0; border-color: #808080; }
  svg { display: block; }
`;
const UnitLabel = styled.label`
  width: ${props => props.$w}px;
`;
const BasketWindow = () => (
  <Frame $x={868} $y={210} $w={649}>
    <Caption>
      <CaptionIcon><svg width="18" height="17"><path d="M1 9L8 1l7 2-7 9z" fill="#c8c8c8" stroke="#444" /><path d="M1 9l7 3v4l-7-3z" fill="#f0a050" stroke="#6a3a10" /><path d="M8 12l8-9v5l-8 8z" fill="#c87820" stroke="#6a3a10" /><path d="M4 10l7-8M3 11l3 1v2" stroke="#333" fill="none" /></svg></CaptionIcon>
      {'篮子管理   -  活动帐户<087075>'}
      <WinButtons />
    </Caption>
    <Body>
      <BasketBody>
        <Line $h={21} $pl={1}>
          <Push>新建篮子组</Push><Gap $w={6} /><Push>新建篮子</Push><Gap $w={31} />
          <UnitLabel htmlFor="unit" $w={57}><Sim>买卖单位:</Sim></UnitLabel>
          <Field id="unit" $w={32} defaultValue="1" /><Gap $w={1} /><Spinner w={17} open />
          <Gap $w={95} /><Push>篮子全平</Push><Gap $w={21} /><Tick text="篮子手工下单需确认" />
        </Line>
        <BasketPanes>
          <Tree>
            <li>
              <svg width="32" height="16"><path d="M.5 4.500h8v8h-8zM2 8.500h5M9 8.500h4" fill="none" stroke="#808080" /><path d="M14 8l5-6 2 2 5-3 4 2v7l-8 5-4-1z" fill="#f8f080" stroke="#222" /><path d="M21 4l-3 6 4 1 4-6" fill="#fff" stroke="#222" /></svg>
              默认篮子组
            </li>
            <li>
              <ul><li>
                <svg width="32" height="18" viewBox="8 0 32 18"><path d="M9 13h8" stroke="#808080" strokeDasharray="1 1" /><path d="M18 15L29 2c3 6 0 12-11 13z" fill="#e02020" /><path d="M29 2c4 7 0 13-11 14" fill="none" stroke="#111" strokeWidth="2" /><path d="M36.500 4v10" stroke="#209030" /></svg>
                <mark><Sim>aaaa</Sim></mark>
              </li></ul>
            </li>
          </Tree>
          <ListBox $rows="163px 17px">
            <Sheet>
              <Table $row={16} $head={18} $line="#c0c0c0" $inset={11}>
                <Cols widths={[19, 35, 110, 60, 60, 75, 0]} />
                <thead><tr>{['', '序...', '品种', '均价', '市价', '浮动盈亏', '总持/..'].map((t, i) => <th key={i}>{t}</th>)}</tr></thead>
                <tbody><Plus><td><svg width="11" height="11"><path d="M.5.5h10v10H.5zM3 5.500h5M5.500 3v5" fill="none" stroke="#000" /></svg></td><td /><td /><td /><td /><td /><td /></Plus></tbody>
              </Table>
            </Sheet>
            <Scroll v parts={[1, 0, 1]} />
            <Scroll parts={[0, 311, 65]} />
          </ListBox>
        </BasketPanes>
      </BasketBody>
    </Body>
  </Frame>
);

/* ---------- basket settings ---------- */
const SetBody = styled.div`
  padding: 11px 11px 2px 11px;
`;
const Pair = styled.div`
  display: flex;
  gap: ${props => props.$gap}px;
  margin-top: ${props => props.$mt}px;
`;
const Split = styled.div`
  display: grid;
  grid-template-columns: 327px 73px;
  gap: 14px;
  margin-top: 5px;
`;
const Actions = styled.div`
  display: flex;
  flex-direction: column;
  padding-top: 13px;
`;
const Sector = styled.select`
  appearance: none;
  width: 140px;
  height: 20px;
  border: 1px solid #adb2b5;
  background: #fff;
`;
const stocks = [
  ['BUY09 沥青2109', 5], ['CU09 沪铜2109', 1], ['NI08 沪镍2108', 2], ['HC10 轧卷板2110', 3], ['SP09 纸浆2109', 5],
  ['RB10 螺纹钢2110', 3], ['EG09 乙二醇2109', 6], ['I09 矿石2109', 2], ['J09 焦炭2109', 1], ['AP10 苹果2110', 4],
  ['TA09 PTA2109', 8], ['RU09 橡胶2109', 2], ['PG09 液化气2109', 4], ['MA09 甲醇2109', 8],
];
const StockBox = styled(Sheet)`
  height: 263px;
  padding: 1px;
  border: 1px solid #828790;
`;
const SettingsWindow = () => (
  <Frame $x={868} $y={374} $w={453} $active>
    <Caption>篮子设置<WinButtons only /></Caption>
    <Body $active>
      <SetBody>
        <Line $h={21}>
          <UnitLabel htmlFor="name" $w={58}><Sim>篮子名称:</Sim></UnitLabel>
          <Field id="name" $w={84} defaultValue="aaaa" disabled /><Gap $w={20} />
          <Tick text="交易映射:" on /><Gap $w={9} />
          <Field $w={96} $gray defaultValue="SQAU30" aria-label="交易映射" /><Gap $w={4} /><Push $w={21}><Half>...</Half></Push>
        </Line>
        <Pair $gap={8} $mt={5}>
          <Group $w={200} $lead={-3} $pad="0 0 14px 9px">
            <legend>篮子市值分配</legend>
            <Line $cols="90px 72px 1fr"><Radio name="val" text="金额:" on /><Field $w={66} defaultValue="30" aria-label="金额" /><span>万元</span></Line>
            <Line $cols="90px 72px 1fr"><Radio name="val" text="按总资产:" /><Field $w={66} defaultValue="10" aria-label="总资产" /><Half>%</Half></Line>
          </Group>
          <Group $w={204} $lead={-3} $pad="1px 0 0 8px">
            <legend>下单超价设置</legend>
            <Line $h={21}><Radio name="over" text="使用1档买卖盘" /></Line>
            <Line $h={21} $cols="92px 67px 1fr"><Radio name="over" text="按百分比" /><Field $w={60} defaultValue="0.1" aria-label="百分比" /><Half>%</Half></Line>
            <Line $h={21} $cols="92px 67px 1fr"><Radio name="over" text="按最小变动" on /><Field $w={60} defaultValue="2" aria-label="最小变动" /></Line>
          </Group>
        </Pair>
        <Pair $gap={6} $mt={5}>
          <Group $w={199} $lead={-6} $pad="2px 0 13px 12px">
            <legend>开仓条件设定</legend>
            <Line $cols="96px 1fr"><Tick text="忽略涨跌停版" /><Tick text="忽略ST股票" /></Line>
            <Line><Tick text="忽略涨跌幅超过" /><Gap $w={1} /><Field $w={38} defaultValue="1" aria-label="涨跌幅" /><Gap $w={4} /><Half>%</Half></Line>
          </Group>
          <Group $w={209} $lead={-18} $pad="8px 0 17px 24px">
            <legend>买卖追单设置</legend>
            <Line $h={19}>追单使用公用的追单设置</Line>
            <Push $w={111} $focus>程序化交易设置</Push>
          </Group>
        </Pair>
        <Split>
          <div>
            <Pair $gap={6} $mt={0}>
              <Group $w={199} $lead={-8} $pad="0 0 7px 14px">
                <legend>权重设置</legend>
                <Line $cols="54px 75px 1fr"><Radio name="wt" text="等额" on /><Radio name="wt" text="流通市值" /><Radio name="wt" text="自定义" /></Line>
              </Group>
              <Line $mt={2}><Tick text="使用大单滑点委托" /></Line>
            </Pair>
            <Line $h={21} $mt={7} $pl={3}>
              <Tick text="板块(L)" /><Gap $w={9} />
              <Sector disabled aria-label="板块" /><Gap $w={9} />
              <Field $w={60} disabled aria-label="代码" /><Gap $w={2} /><Push $w={37} disabled>查找</Push>
            </Line>
            <Line $h={23}>篮子成份股（股数计算按买入条件计算）</Line>
            <StockBox>
              <Table $row={16} $head={16} $line="#dcdcdc">
                <Cols widths={[46, 110, 70, 0]} />
                <thead><tr><th>序号</th><th>品种名称</th><th>数量</th><th /></tr></thead>
                <tbody>
                  {stocks.map(([name, n], i) => <tr key={name}><td><Sim>{i + 1}</Sim></td><td><Sim>{name}</Sim></td><td><Sim>{n}</Sim></td><td /></tr>)}
                  <Blank n={4} />
                </tbody>
              </Table>
            </StockBox>
            <Line $h={16} $mt={8}><span><Sim>篮子市值约 360.83 万</Sim></span></Line>
          </div>
          <Actions>
            <Push>确定</Push><Gap $w={15} /><Push>取消</Push><Gap $w={26} />
            <Push>新增<Half>(<u>D</u>)</Half></Push><Gap $w={13} /><Push>删除<Half>(<u>R</u>)</Half></Push><Gap $w={12} />
            <Push>清空</Push><Gap $w={20} /><Push disabled>修改数量<Half>(<u>M</u>)</Half></Push><Gap $w={16} />
            <Push disabled>刷新股数</Push><Gap $w={5} />
            <Cell $pl={2}><Tick text="允许刷新" /></Cell><Gap $w={4} />
            <Cell $pl={2}><Tick lines={['刷新时考', '虑保证金']} on /></Cell><Gap $w={25} />
            <Push>导入品种</Push><Gap $w={9} /><Push>导出数据</Push>
          </Actions>
        </Split>
      </SetBody>
    </Body>
  </Frame>
);

const menus = [['文件', 'F'], ['板块', 'M'], ['画面', 'P'], ['查看', 'V'], ['交易', 'O'], ['分析', 'A'], ['工具', 'T'], ['窗口', 'W'], ['帮助', 'H']];
const MenuIcon = styled.svg`
  flex: none;
  margin-right: -8px;
`;

class App extends Component {
  render() {
    return (
      <Desk>
        <GlobalStyle />
        <TitleBar>
          <svg width="10" height="14"><path d="M0 0h10v14H0z" fill="#f00" /><path d="M0 2h8v10H0z" fill="#fff" /><path d="M0 9l3-3 1 2 4-5" stroke="#f00" strokeWidth="2" fill="none" /></svg>
          <TitleText>金字塔决策交易系统 - [<b>500033</b>] - [技术分析]</TitleText>
          <Links>
            {['论 坛', '股票池', '锁 定', '客 服', '策略库', '公 式', '购 买', '账 户'].map(t => <LinkButton key={t} $red={t === '购 买'}>{t}</LinkButton>)}
          </Links>
        </TitleBar>
        <MenuBar>
          <MenuIcon width="14" height="17"><path d="M0 1h13v15H0" fill="#fff" stroke="#000" /><path d="M0 1h13v3H0z" fill="#101080" /><path d="M0 3h7v10H0z" fill="#fff" stroke="#f00" strokeWidth="2" /><path d="M0 10l5-4M9 7h3M9 10h3" stroke="#f00" /></MenuIcon>
          {menus.map(([t, k]) => <Plain key={k}>{t}(<u>{k}</u>)</Plain>)}
        </MenuBar>
        <Tools>
          {tools.map(([w, icon, on, dim], i) => w === '|'
            ? <Sep key={i} $w={icon} />
            : <Tool key={i} $w={w} $on={on === 'on'} $dim={!!dim} aria-label={`tool ${i}`}>{icon}</Tool>)}
        </Tools>
        <Chart />
        <Lower />

        <Remote>
          <RemoteIcons $gap={8}>
            <svg width="12" height="6"><path d="M2 1h9L6.500 5z" fill="#e8eef6" /></svg>
            <svg width="12" height="10"><path d="M0 5h5M5 1v8M5 3h6v4H5M11 1v8" fill="none" stroke="#e8eef6" strokeWidth="1.500" /></svg>
            <svg width="12" height="12"><path d="M1 12V9M4 12V7M7.500 12V4M11 12V0" stroke="#e8eef6" strokeWidth="2" /></svg>
          </RemoteIcons>
          <span>49.232.0.184</span>
          <RemoteIcons $gap={14}>
            <svg width="8" height="10"><path d="M0 9h8" stroke="#fff" strokeWidth="2" /></svg>
            <svg width="10" height="10"><path d="M3 4V1h6v5H6M1 4h5v5H1z" fill="none" stroke="#fff" strokeWidth="1.500" /></svg>
            <svg width="9" height="8"><path d="M1 0l7 8M8 0L1 8" stroke="#fff" strokeWidth="2" /></svg>
          </RemoteIcons>
        </Remote>

        <Status />
        <TradeWindow />
        <BasketWindow />
        <SettingsWindow />
        <Mark $x={509} $y={125} $w={208} $h={102} />
        <Mark $x={1024} $y={394} $w={254} $h={65} />
        <Mark $x={892} $y={666} $w={286} $h={306} />
      </Desk>
    );
  }
}

export default App;
